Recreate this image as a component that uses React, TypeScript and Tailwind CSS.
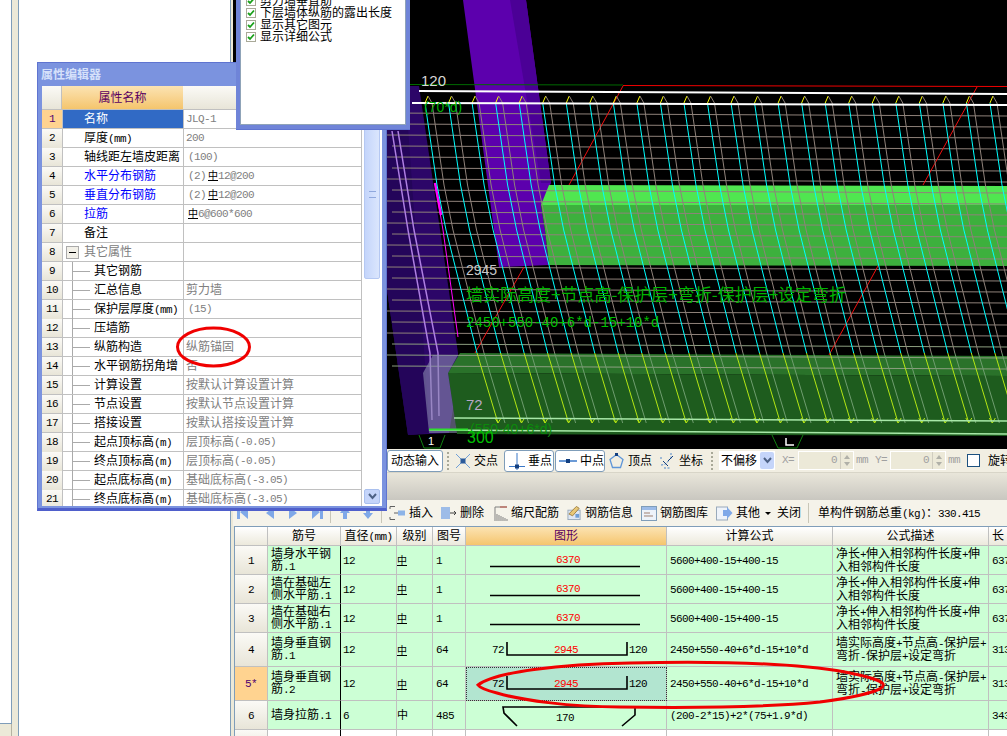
import React from "react";

const latin = "font-['Liberation_Mono',monospace] text-[11px] tracking-[-0.6px]";

// ascii runs get the narrow mono face, the rest stays CJK
const T = ({ s }: { s: string }) => (
  <>
    {s.split(/([\x00-\x7f]+)/).map((p, i) =>
      /^[\x00-\x7f]+$/.test(p) ? (
        <span key={i} className={latin}>
          {p}
        </span>
      ) : (
        <span key={i}>{p}</span>
      )
    )}
  </>
);

const Bar = () => (
  <span className="inline-block w-[10px] h-[10px] text-[10px] leading-[9px] text-center border-b border-black text-black">中</span>
);

const propRows = [
  { n: "1", name: "名称", value: "JLQ-1", selected: true },
  { n: "2", name: "厚度(mm)", value: "200" },
  { n: "3", name: "轴线距左墙皮距离", value: "(100)", pad: true },
  { n: "4", name: "水平分布钢筋", blue: true, pre: "(2)", value: "12@200", pad: true, bar: true },
  { n: "5", name: "垂直分布钢筋", blue: true, pre: "(2)", value: "12@200", pad: true, bar: true },
  { n: "6", name: "拉筋", blue: true, value: "6@600*600", pad: true, bar: true },
  { n: "7", name: "备注", value: "" },
  { n: "8", name: "其它属性", value: "", group: true },
  { n: "9", name: "其它钢筋", value: "", tree: true },
  { n: "10", name: "汇总信息", value: "剪力墙", tree: true },
  { n: "11", name: "保护层厚度(mm)", value: "(15)", tree: true, pad: true },
  { n: "12", name: "压墙筋", value: "", tree: true },
  { n: "13", name: "纵筋构造", value: "纵筋锚固", tree: true },
  { n: "14", name: "水平钢筋拐角增", value: "否", tree: true },
  { n: "15", name: "计算设置", value: "按默认计算设置计算", tree: true },
  { n: "16", name: "节点设置", value: "按默认节点设置计算", tree: true },
  { n: "17", name: "搭接设置", value: "按默认搭接设置计算", tree: true },
  { n: "18", name: "起点顶标高(m)", value: "层顶标高(-0.05)", tree: true },
  { n: "19", name: "终点顶标高(m)", value: "层顶标高(-0.05)", tree: true },
  { n: "20", name: "起点底标高(m)", value: "基础底标高(-3.05)", tree: true },
  { n: "21", name: "终点底标高(m)", value: "基础底标高(-3.05)", tree: true },
];

const PropertyEditor = () => (
  <div className="absolute left-[37px] top-[62px] w-[350px] h-[449px] bg-[#7b93df] border border-[#5f74d0] border-b-[3px] border-b-[#4f5fcb] flex flex-col">
    <div className="h-[23px] pl-[3px] flex items-center text-[12px] font-bold text-[#d5e0fa]">属性编辑器</div>
    <div className="flex-1 mx-[4px] mb-[2px] bg-white flex overflow-hidden">
      <div className="w-[320px]">
        <div className="grid grid-cols-[20px_121px_179px] h-[24px] border-b border-[#c0c0c0]">
          <div className="bg-linear-to-b from-[#fbfaf6] to-[#e8e5d8] border-r border-[#c0c0c0]" />
          <div className="bg-linear-to-b from-[#fbe3b2] to-[#f5c56c] text-[#5a0060] text-[12px] flex items-center justify-center">
            属性名称
          </div>
          <div className="bg-linear-to-b from-[#fbfaf6] to-[#e8e5d8]" />
        </div>
        {propRows.map((r) => (
          <div key={r.n} className="grid grid-cols-[20px_121px_179px] h-[19px] border-b border-[#c0c0c0] text-[12px]">
            <div
              className={
                r.selected
                  ? "bg-[#ffd390] text-[#500070] flex items-center justify-center"
                  : "bg-linear-to-b from-[#fbfaf6] to-[#e8e5d8] flex items-center justify-center"
              }
            >
              <T s={r.n} />
            </div>
            <div
              className={
                r.selected
                  ? "bg-[#316ac5] text-white flex items-center pl-[21px] border-l border-[#c0c0c0]"
                  : r.blue
                  ? "text-[#0000ff] flex items-center pl-[21px] border-l border-[#c0c0c0]"
                  : r.group
                  ? "text-[#808080] flex items-center border-l border-[#c0c0c0]"
                  : "text-black flex items-center border-l border-[#c0c0c0] " + (r.tree ? "" : "pl-[21px]")
              }
            >
              {r.group && (
                <span className="ml-[3px] mr-[5px] w-[13px] h-[13px] border border-[#aaa] bg-[#f2f0e8] flex items-center justify-center">
                  <span className="w-[7px] h-[1px] bg-black" />
                </span>
              )}
              {r.tree && (
                <span className="ml-[9px] mr-[4px] w-[18px] h-full border-l border-[#aaa] flex items-center shrink-0">
                  <span className="w-full border-t border-[#aaa]" />
                </span>
              )}
              <span className="whitespace-nowrap overflow-hidden">
                <T s={r.name} />
              </span>
            </div>
            <div
              className={
                "border-l border-r border-[#c0c0c0] text-[#808080] whitespace-pre flex items-center " +
                (r.pad ? "pl-[4px]" : "pl-[2px]")
              }
            >
              {r.pre && <T s={r.pre} />}
              {r.pre && <span className="w-[2px]" />}
              {r.bar && <Bar />}
              <T s={r.value} />
            </div>
          </div>
        ))}
      </div>
      <div className="w-[20px] pl-[2px] pr-[2px] flex flex-col bg-white">
        <div className="h-[193px] bg-linear-to-r from-[#c4d5fb] to-[#dbe6fd] border border-[#b5c8f2] rounded-[2px] flex flex-col items-center justify-end pb-[80px]">
          <span className="w-[7px] h-[7px] border-y border-[#8fa8dd]" />
        </div>
        <div className="flex-1" />
        <div className="h-[15px] bg-[#c5d5fa] border border-[#aac0ee] rounded-[2px] mb-[2px] flex items-center justify-center">
          <svg width="9" height="7" viewBox="0 0 9 7">
            <path d="M1 1 L4.5 5 L8 1" fill="none" stroke="#4d6185" strokeWidth="2" />
          </svg>
        </div>
      </div>
    </div>
  </div>
);

const Check = ({ label }: { label: string }) => (
  <div className="h-[12px] flex items-center gap-[4px] text-[12px] leading-[12px] text-black whitespace-nowrap">
    <span className="w-[10px] h-[10px] bg-white border border-[#a9a998] flex items-center justify-center shrink-0">
      <svg width="8" height="8" viewBox="0 0 8 8">
        <path d="M1 4 L3 6 L7 1.5" fill="none" stroke="#18a018" strokeWidth="1.8" />
      </svg>
    </span>
    {label}
  </div>
);

const OptionsPopup = () => (
  <div className="absolute left-[236px] top-0 w-[174px] h-[130px] bg-[#6f84d8] border-b border-[#5f74d0] pl-[4px] pr-[4px] pb-[4px]">
    <div className="h-full bg-white border-x border-b border-[#8fa3b8] overflow-hidden pl-[5px]">
      <div className="-mt-[5px]">
        <Check label="剪力墙垂直筋" />
        <Check label="下层墙体纵筋的露出长度" />
        <Check label="显示其它图元" />
        <Check label="显示详细公式" />
      </div>
    </div>
  </div>
);

// stirrups drift right as they go down, from the perspective
const drift: [number, number][] = [
  [103, 0],
  [185, 12],
  [230, 21],
  [353, 52],
  [423, 73],
];
const bars = Array.from({ length: 25 }, (_, i) => 425 + i * 23.54);
const hLines = Array.from({ length: 24 }, (_, i) => 113 + i * 11);

const pts = (x: number, from: number, to: number) =>
  drift
    .slice(from, to)
    .map(([y, d]) => `${x + d},${y}`)
    .join(" ");

const View3D = () => (
  <svg width="774" height="449" viewBox="233 0 774 449" className="block bg-black">
    <polygon points="387,86 419,86 458,353 458,380 449,433 408,435 387,290" fill="#2c0668" />
    <polygon points="387,86 405,86 430,433 408,435 387,290" fill="#24055a" />
    <polygon points="463,0 526,0 551,183 541,205 545,230 549,265 499,267" fill="#5c00ad" />
    <polygon points="510,0 526,0 551,183 541,183" fill="#4b0096" />
    <polygon points="549,185 1007,186 1007,205 541,205" fill="#50e650" />
    <polygon points="541,205 1007,205 1007,266 549,265 545,230" fill="#3db03d" />
    <polygon points="460,353 1007,356 1007,376 448,373" fill="#2a722a" />
    <polygon points="448,373 1007,376 1007,436 457,434" fill="#1e5c1e" />
    {hLines.map((y, i) => (
      <line
        key={y}
        x1={i % 2 ? 392 : 387}
        y1={y}
        x2={1007}
        y2={y + 3}
        stroke={i > 20 ? "#8d9f80" : "#8f827a"}
      />
    ))}
    <polyline points="392,131 408,230 430,353 432,420" fill="none" stroke="#ae7fe2" strokeWidth="1.5" />
    <polyline points="398,131 414,230 438,353 439,416" fill="none" stroke="#ae7fe2" strokeWidth="1.5" />
    <polyline points="435,183 443,230 458,337" fill="none" stroke="#ff00ff" />
    <line x1="435" y1="183" x2="441" y2="215" stroke="#ff00ff" strokeWidth="2.5" />
    <line x1="623" y1="86" x2="569" y2="185" stroke="#f01010" />
    <line x1="977" y1="87" x2="923" y2="185" stroke="#f01010" />
    <line x1="524" y1="267" x2="475" y2="353" stroke="#f01010" />
    <line x1="878" y1="266" x2="829" y2="355" stroke="#f01010" />
    {bars.map((x) => (
      <g key={x}>
        <polyline points={pts(x + 7, 0, 4)} fill="none" stroke="#8f827a" />
        <polyline points={pts(x + 7, 3, 5)} fill="none" stroke="#6f9d6f" />
        <polyline points={pts(x, 0, 4)} fill="none" stroke="#00ffff" />
        <polyline points={pts(x, 3, 5)} fill="none" stroke="#b4e614" />
        <path d={`M${x} 103 L${x + 3} 96`} stroke="#ffff00" fill="none" />
        <path d={`M${x + 3} 96 L${x + 7} 103`} stroke="#8f827a" fill="none" />
        <path d={`M${x + 70} 418 L${x + 73} 423 L${x + 76} 418`} stroke="#b4e614" fill="none" />
      </g>
    ))}
    <line x1="410" y1="84.5" x2="623" y2="85" stroke="#006a00" />
    <line x1="623" y1="85.5" x2="1007" y2="86.5" stroke="#f00000" />
    <line x1="419" y1="91" x2="1007" y2="94" stroke="#ffffff" strokeWidth="2" />
    <line x1="412" y1="103" x2="1007" y2="105" stroke="#ffffff" strokeWidth="2" />
    <polygon points="433,355 458,355 448,373 457,433 429,433 423,373" fill="#8a8ab0" fillOpacity="0.6" />
    <line x1="454" y1="418" x2="1007" y2="421" stroke="#a8e8a8" strokeWidth="1.5" />
    <line x1="429" y1="430" x2="1007" y2="434" stroke="#a8e8a8" strokeWidth="1.5" />
    <line x1="429" y1="429.5" x2="468" y2="429.5" stroke="#30e030" strokeWidth="2" />
    <path d="M419 435 L424 448 L440 448 L445 435" fill="none" stroke="#108010" />
    <path d="M772 435 L778 448 L797 448 L803 435" fill="none" stroke="#108010" />
    <text x="428" y="445" fill="#ffffff" fontSize="11" className="font-['Liberation_Sans',sans-serif]">1</text>
    <path d="M786 438 V445 H794" fill="none" stroke="#ffffff" strokeWidth="1.5" />
    <text x="421" y="86" fill="#d8d8d8" fontSize="15" className="font-['Liberation_Sans',sans-serif]">120</text>
    <text x="424" y="112" fill="#00b000" fontSize="14" className="font-['Liberation_Sans',sans-serif]">(70*d)</text>
    <text x="466" y="275" fill="#c8c8c8" fontSize="14" className="font-['Liberation_Sans',sans-serif]">2945</text>
    <text x="466" y="301" fill="#00b400" fontSize="17" className="font-['Noto_Sans_CJK_SC',sans-serif]">
      墙实际高度+节点高-保护层+弯折-保护层+设定弯折
    </text>
    <text x="466" y="327" fill="#00c000" fontSize="14" className="font-['Liberation_Mono',monospace]">
      2450+550-40+6*d-15+10*d
    </text>
    <text x="466" y="410" fill="#b8a8c8" fontSize="15" className="font-['Liberation_Sans',sans-serif]">72</text>
    <text x="470" y="434" fill="#0c8a0c" fontSize="14" className="font-['Liberation_Sans',sans-serif]">(550-40+6*d)</text>
    <text x="467" y="443" fill="#00c000" fontSize="16" className="font-['Liberation_Sans',sans-serif]">300</text>
  </svg>
);

const Grip = ({ ml }: { ml: string }) => (
  <span className={ml + " w-[3px] h-[20px] flex flex-col justify-between py-[1px] shrink-0"}>
    {[0, 1, 2, 3, 4].map((i) => (
      <span key={i} className="w-[2px] h-[2px] bg-[#a8a898]" />
    ))}
  </span>
);

const Spin = ({ w }: { w: string }) => (
  <span className={w + " h-[19px] bg-[#ece9d8] border border-white flex items-center justify-end text-[#a0a0a0] shrink-0"}>
    <span className={latin + " mr-[3px]"}>0</span>
    <span className="w-[13px] h-full border-l border-[#d0cdc0] flex flex-col items-center justify-center gap-[3px]">
      <span className="w-0 h-0 border-x-[3px] border-x-transparent border-b-[4px] border-b-[#b0b0a8]" />
      <span className="w-0 h-0 border-x-[3px] border-x-transparent border-t-[4px] border-t-[#b0b0a8]" />
    </span>
  </span>
);

const SnapToolbar = () => (
  <div className="h-[24px] shrink-0 bg-[#f1eee2] flex items-center pl-[154px] text-[12px] text-black whitespace-nowrap border-b border-[#d8d5c8]">
    <span className="w-[56px] h-[22px] shrink-0 bg-white border border-[#7f9db9] rounded-[3px] flex items-center justify-end pr-[3px]">
      动态输入
    </span>
    <Grip ml="ml-[4px]" />
    <svg width="16" height="16" viewBox="0 0 16 16" className="ml-[5px] shrink-0">
      <path d="M1 1 L15 15 M15 1 L1 15" stroke="#6f9fd8" />
      <rect x="5.5" y="5.5" width="5" height="5" fill="#2a5a9a" />
    </svg>
    <span className="ml-[3px] w-[30px] shrink-0">交点</span>
    <span className="w-[50px] h-[22px] shrink-0 bg-white border border-[#7f9db9] rounded-[3px] flex items-center pl-[4px] gap-[3px]">
      <svg width="16" height="18" viewBox="0 0 16 18">
        <path d="M0 14.5 H16 M8 1 V18" stroke="#3a78c8" />
        <rect x="6" y="12.5" width="4" height="4" fill="#123f80" />
      </svg>
      垂点
    </span>
    <span className="ml-[1px] w-[50px] h-[22px] shrink-0 bg-white border border-[#7f9db9] rounded-[3px] flex items-center pl-[3px] gap-[3px]">
      <svg width="18" height="10" viewBox="0 0 18 10">
        <path d="M0 5 H18" stroke="#3a78c8" strokeWidth="1.5" />
        <rect x="7" y="3" width="4" height="4" fill="#123f80" />
      </svg>
      中点
    </span>
    <svg width="15" height="16" viewBox="0 0 15 16" className="ml-[4px] shrink-0">
      <path d="M7.5 1.5 L14 6.5 L11.5 14.5 H3.5 L1 6.5 Z" fill="none" stroke="#5f96d8" strokeWidth="1.3" />
      <rect x="6" y="0" width="3" height="3" fill="#123f80" />
    </svg>
    <span className="ml-[4px] w-[31px] shrink-0">顶点</span>
    <svg width="16" height="18" viewBox="0 0 16 18" className="shrink-0">
      <path d="M2 13 C6 13 9 11 10 7 M12 1 V8 M2 5 V8 M5 16 H12" stroke="#4f86c8" fill="none" strokeDasharray="2 1.5" />
      <path d="M4 9 L9 14 M9 9 L14 4" stroke="#123f80" fill="none" />
    </svg>
    <span className="ml-[4px] w-[23px] shrink-0">坐标</span>
    <Grip ml="ml-[9px]" />
    <span className="ml-[5px] w-[56px] h-[19px] shrink-0 bg-white flex items-center justify-between pl-[2px] pr-[1px]">
      不偏移
      <span className="w-[14px] h-[17px] bg-[#c5d5fa] rounded-[2px] flex items-center justify-center">
        <svg width="9" height="7" viewBox="0 0 9 7">
          <path d="M1 1 L4.5 5 L8 1" fill="none" stroke="#4d6185" strokeWidth="2" />
        </svg>
      </span>
    </span>
    <span className={latin + " ml-[7px] w-[16px] shrink-0 text-[#a0a0a0]"}>X=</span>
    <Spin w="w-[56px]" />
    <span className={latin + " ml-[2px] w-[19px] shrink-0 text-[#a0a0a0]"}>mm</span>
    <span className={latin + " w-[15px] shrink-0 text-[#a0a0a0]"}>Y=</span>
    <Spin w="w-[56px]" />
    <span className={latin + " ml-[2px] w-[19px] shrink-0 text-[#a0a0a0]"}>mm</span>
    <span className="w-[13px] h-[13px] shrink-0 bg-white border border-[#1c5180]" />
    <span className="ml-[8px]">旋转</span>
  </div>
);

const NavIcon = ({ d }: { d: string }) => (
  <svg width="12" height="14" viewBox="0 0 12 14" className="shrink-0">
    <path d={d} fill="#7fa8e8" />
  </svg>
);

const Tool = ({ w, ml, label, children }: { w: string; ml: string; label: string; children: React.ReactNode }) => (
  <span className={ml + " " + w + " flex items-center shrink-0 gap-[3px]"}>
    {children}
    <span>{label}</span>
  </span>
);

const RebarToolbar = () => (
  <div className="h-[26px] shrink-0 bg-[#f5f3ea] flex items-center pl-[4px] text-[12px] text-black whitespace-nowrap">
    <NavIcon d="M0 1 H3 V13 H0 Z M3 6 L11 1 V13 Z" />
    <span className="ml-[15px]" />
    <NavIcon d="M2 7 L10 1 V13 Z" />
    <span className="ml-[11px]" />
    <NavIcon d="M2 1 L10 7 L2 13 Z" />
    <span className="ml-[12px]" />
    <NavIcon d="M12 1 H9 V13 H12 Z M9 6 L1 1 V13 Z" />
    <span className="ml-[7px] w-px h-[20px] bg-[#c8c6b8] shrink-0" />
    <span className="ml-[8px]" />
    <NavIcon d="M6 1 L11 7 H8 V13 H4 V7 H1 Z" />
    <span className="ml-[11px]" />
    <NavIcon d="M6 13 L11 7 H8 V1 H4 V7 H1 Z" />
    <span className="ml-[7px] w-px h-[20px] bg-[#c8c6b8] shrink-0" />
    <Tool ml="ml-[7px]" w="w-[47px]" label="插入">
      <svg width="17" height="16" viewBox="0 0 17 16">
        <path d="M1 1.5 H6 M1 14.5 H6 M1 1.5 V4 M1 12 V14.5 M5 8 H9" stroke="#606060" fill="none" />
        <rect x="9" y="5.5" width="7" height="5" fill="#8db4e8" />
      </svg>
    </Tool>
    <Tool ml="ml-[4px]" w="w-[48px]" label="删除">
      <svg width="17" height="16" viewBox="0 0 17 16">
        <rect x="1" y="2" width="9" height="12" fill="#9dbce8" />
        <path d="M10 8 H16 M14 6 L16 8 L14 10" stroke="#404040" fill="none" />
      </svg>
    </Tool>
    <Tool ml="ml-[6px]" w="w-[65px]" label="缩尺配筋">
      <svg width="14" height="17" viewBox="0 0 14 17">
        <path d="M1 2 H13 M1 2 V16 M3 16 V9 M5 16 V10 M7 16 V11 M9 16 V12 M11 16 V13 M13 16 V14" stroke="#808080" fill="none" />
        <path d="M6 2 H13" stroke="#c05040" />
      </svg>
    </Tool>
    <Tool ml="ml-[8px]" w="w-[66px]" label="钢筋信息">
      <svg width="16" height="16" viewBox="0 0 16 16">
        <rect x="1" y="5" width="13" height="10" fill="#dfe8f5" stroke="#9ab" />
        <path d="M2 9 L10 1 L13 3 L6 11 Z" fill="#e8c878" stroke="#a08040" />
        <rect x="9" y="9" width="4" height="4" fill="#6f9fd8" />
      </svg>
    </Tool>
    <Tool ml="ml-[8px]" w="w-[67px]" label="钢筋图库">
      <svg width="16" height="15" viewBox="0 0 16 15">
        <rect x="0.5" y="0.5" width="15" height="14" fill="#eef3fa" stroke="#7f9db9" />
        <rect x="1" y="1" width="14" height="3" fill="#9dbce8" />
        <path d="M3 7 H9 M3 10 H12" stroke="#a08070" />
      </svg>
    </Tool>
    <Tool ml="ml-[8px]" w="w-[52px]" label="其他">
      <svg width="17" height="15" viewBox="0 0 17 15">
        <rect x="0.5" y="1" width="11" height="13" fill="#eef3fa" stroke="#9ab" />
        <path d="M7 4 H11 V1 L16.5 7 L11 13 V10 H7 Z" fill="#7fa8e8" />
      </svg>
    </Tool>
    <span className="w-0 h-0 shrink-0 border-x-[3px] border-x-transparent border-t-[3px] border-t-black -ml-[3px]" />
    <span className="ml-[6px] w-[24px] shrink-0">关闭</span>
    <span className="ml-[7px] w-px h-[20px] bg-[#c8c6b8] shrink-0" />
    <span className="ml-[9px]">
      <T s="单构件钢筋总重(kg)：330.415" />
    </span>
  </div>
);

type Fig = { kind: "line" | "bracket" | "hook"; h: number };

const Figure = ({ kind, h }: Fig) => (
  <svg width="200" height={h - 1} viewBox={`0 0 200 ${h - 1}`} className="block">
    {kind === "line" && (
      <>
        <text x="102" y="17" textAnchor="middle" fill="#ff0000" className={latin}>6370</text>
        <line x1="24" y1="20.5" x2="174" y2="20.5" stroke="#000" strokeWidth="1.6" />
      </>
    )}
    {kind === "bracket" && (
      <>
        <text x="26" y="20" className={latin}>72</text>
        <text x="100" y="20" textAnchor="middle" fill="#ff0000" className={latin}>2945</text>
        <text x="163" y="20" className={latin}>120</text>
        <path d="M41 9 V22 H161 V9" fill="none" stroke="#000" strokeWidth="1.6" />
      </>
    )}
    {kind === "hook" && (
      <>
        <text x="99" y="20" textAnchor="middle" className={latin}>170</text>
        <path d="M51 25 L38 12 L37 6 H169 V14 L156 25" fill="none" stroke="#000" strokeWidth="1.6" />
      </>
    )}
  </svg>
);

const rebarRows = [
  { n: "1", name: "墙身水平钢筋.1", d: "12", no: "1", bar: true, h: 29, kind: "line", f: "5600+400-15+400-15", desc: ["净长+伸入相邻构件长度+伸", "入相邻构件长度"], len: "6370" },
  { n: "2", name: "墙在基础左侧水平筋.1", d: "12", no: "1", bar: true, h: 29, kind: "line", f: "5600+400-15+400-15", desc: ["净长+伸入相邻构件长度+伸", "入相邻构件长度"], len: "6370" },
  { n: "3", name: "墙在基础右侧水平筋.1", d: "12", no: "1", bar: true, h: 29, kind: "line", f: "5600+400-15+400-15", desc: ["净长+伸入相邻构件长度+伸", "入相邻构件长度"], len: "6370" },
  { n: "4", name: "墙身垂直钢筋.1", d: "12", no: "64", bar: true, h: 34, kind: "bracket", f: "2450+550-40+6*d-15+10*d", desc: ["墙实际高度+节点高-保护层+", "弯折-保护层+设定弯折"], len: "3137" },
  { n: "5*", name: "墙身垂直钢筋.2", d: "12", no: "64", bar: true, h: 34, kind: "bracket", f: "2450+550-40+6*d-15+10*d", desc: ["墙实际高度+节点高-保护层+", "弯折-保护层+设定弯折"], len: "3137", selected: true },
  { n: "6", name: "墙身拉筋.1", d: "6", no: "485", bar: false, h: 29, kind: "hook", f: "(200-2*15)+2*(75+1.9*d)", desc: [], len: "343" },
] as const;

const cell = "border-r border-b border-[#c0c0c0] p-0 align-middle text-left font-normal";
const headCell = "border-r border-b border-[#c0c0c0] p-0 font-normal text-center bg-linear-to-b from-white to-[#ece9dc]";

const RebarTable = () => (
  <div className="flex-1 min-h-0 ml-[1px] mr-0 border-l border-t border-[#7f9db9] overflow-hidden bg-white">
    <table className="table-fixed border-separate border-spacing-0 w-[794px] text-[12px] leading-[12px] text-black">
      <colgroup>
        <col className="w-[33px]" />
        <col className="w-[73px]" />
        <col className="w-[56px]" />
        <col className="w-[36px]" />
        <col className="w-[33px]" />
        <col className="w-[201px]" />
        <col className="w-[166px]" />
        <col className="w-[156px]" />
        <col className="w-[40px]" />
      </colgroup>
      <thead>
        <tr className="h-[19px]">
          <th className={headCell} />
          <th className={headCell}>筋号</th>
          <th className={headCell}>
            <T s="直径(mm)" />
          </th>
          <th className={headCell}>级别</th>
          <th className={headCell}>图号</th>
          <th className="border-r border-b border-[#c0c0c0] p-0 font-normal text-center text-[#5a0060] bg-linear-to-b from-[#fbe3b2] to-[#f5c56c]">
            图形
          </th>
          <th className={headCell}>计算公式</th>
          <th className={headCell}>公式描述</th>
          <th className={headCell + " text-left pl-[3px]"}>长</th>
        </tr>
      </thead>
      <tbody>
        {rebarRows.map((r) => (
          <tr key={r.n} style={{ height: r.h }}>
            <td
              className={
                "selected" in r
                  ? "border-r border-b border-[#c0c0c0] p-0 text-center bg-[#ffd390] text-[#500070]"
                  : "border-r border-b border-[#c0c0c0] p-0 text-center bg-linear-to-b from-[#fbfaf6] to-[#e8e5d8]"
              }
            >
              <T s={r.n} />
            </td>
            <td className="border-r border-b border-r-black border-b-[#c0c0c0] p-0 pl-[3px] pr-[7px] bg-[#ccffd5] align-middle">
              <T s={r.name} />
            </td>
            <td className={cell + " pl-[2px] bg-[#ccffd5]"}>
              <T s={r.d} />
            </td>
            <td className={cell + " text-center bg-[#ccffd5]"}>
              {r.bar ? <Bar /> : <span className="text-[11px]">中</span>}
            </td>
            <td className={cell + " pl-[3px] bg-[#ccffd5]"}>
              <T s={r.no} />
            </td>
            <td
              className={
                "selected" in r
                  ? cell + " bg-[#b2e5d0] outline-1 outline-dotted -outline-offset-1 outline-[#333]"
                  : cell + " bg-[#ccffd5]"
              }
            >
              <Figure kind={r.kind} h={r.h} />
            </td>
            <td className={cell + " pl-[3px] bg-[#ccffd5] whitespace-nowrap"}>
              <T s={r.f} />
            </td>
            <td className={cell + " pl-[3px] bg-[#ccffd5] whitespace-nowrap"}>
              {r.desc.map((l) => (
                <div key={l}>
                  <T s={l} />
                </div>
              ))}
            </td>
            <td className={cell + " pl-[3px] bg-[#ccffd5] whitespace-nowrap"}>
              <T s={r.len} />
            </td>
          </tr>
        ))}
        <tr className="h-[20px]">
          <td className="border-r border-[#c0c0c0] bg-linear-to-b from-[#fbfaf6] to-[#e8e5d8]" />
          <td className="border-r border-black" />
          <td className="border-r border-[#c0c0c0]" />
          <td className="border-r border-[#c0c0c0]" />
          <td className="border-r border-[#c0c0c0]" />
          <td className="border-r border-[#c0c0c0]" />
          <td className="border-r border-[#c0c0c0]" />
          <td className="border-r border-[#c0c0c0]" />
          <td />
        </tr>
      </tbody>
    </table>
  </div>
);

export default function App() {
  return (
    <div className="relative w-[1007px] h-[736px] overflow-hidden flex bg-[#ece9d8] font-['Liberation_Sans','Noto_Sans_CJK_SC',sans-serif] text-[12px]">
      <div className="w-[12px] shrink-0 flex flex-col">
        <div className="flex-1 bg-white border-r border-b border-[#7f9db9]" />
        <div className="h-[12px] bg-[#ece9d8] border-r border-[#b5b2a2]" />
      </div>
      <div className="w-[6px] shrink-0 bg-[#ece9d8]" />
      <div className="w-[213px] shrink-0 bg-white border-l border-r border-[#7f9db9]" />
      <main className="flex-1 min-w-0 flex flex-col pl-[2px] bg-[#ece9d8]">
        <View3D />
        <SnapToolbar />
        <div className="h-[27px] shrink-0 bg-linear-to-b from-[#e9e6da] to-[#c9c7c0]" />
        <RebarToolbar />
        <RebarTable />
      </main>
      <PropertyEditor />
      <OptionsPopup />
      <svg width="1007" height="736" className="absolute inset-0 pointer-events-none">
        <ellipse cx="213.5" cy="347" rx="36" ry="19" fill="none" stroke="#f00000" strokeWidth="3" />
        <path
          d="M478 685 C495 672 560 664 630 663 C720 661 800 664 845 672 C875 678 885 682 883 686 C880 692 850 698 820 702 C770 707 690 708 620 707 C570 707 520 700 497 693 C485 690 480 688 478 685 Z"
          fill="none"
          stroke="#f00000"
          strokeWidth="3"
        />
      </svg>
    </div>
  );
}
